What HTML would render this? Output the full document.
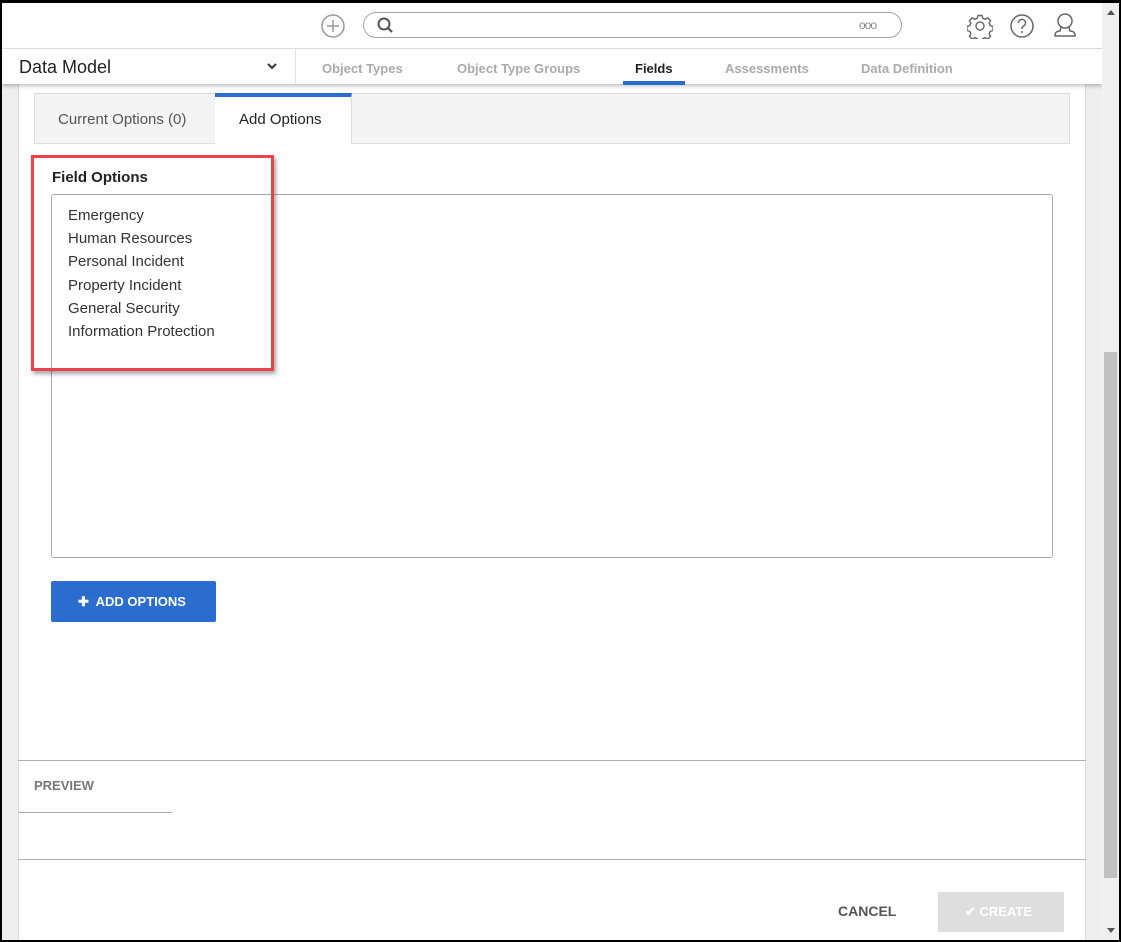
<!DOCTYPE html>
<html><head><style>
*{box-sizing:border-box;margin:0;padding:0}
body{width:1121px;height:942px;background:#000;font-family:"Liberation Sans",sans-serif;position:relative;overflow:hidden}
.abs{position:absolute}
</style></head><body>
<div class="abs" style="left:2px;top:3px;width:1100px;height:937px;background:#eeeeee"></div>
<div class="abs" style="left:18px;top:84px;width:1068px;height:856px;background:#fff;border-left:1px solid #ddd;border-right:1px solid #ddd"></div>
<div class="abs" style="left:2px;top:3px;width:1100px;height:46px;background:#fff;border-bottom:1px solid #e2e2e2"></div>
<svg class="abs" style="left:320px;top:13px" width="26" height="26" viewBox="0 0 26 26"><circle cx="13" cy="13" r="11" fill="none" stroke="#9a9a9a" stroke-width="1.5"/><path d="M13 7v12M7 13h12" stroke="#9a9a9a" stroke-width="1.5"/></svg>
<div class="abs" style="left:363px;top:12px;width:539px;height:26px;border:1.5px solid #a5a5a5;border-radius:13px;background:#fff"></div>
<svg class="abs" style="left:376px;top:16px" width="18" height="18" viewBox="0 0 18 18"><circle cx="8" cy="8" r="5.5" fill="none" stroke="#555" stroke-width="2"/><path d="M12 12l4 4" stroke="#555" stroke-width="2.2"/></svg>
<div class="abs" style="left:859px;top:18px;font-size:12px;color:#888;letter-spacing:-1px">ooo</div>
<svg class="abs" style="left:967px;top:13px" width="26" height="26" viewBox="0 0 26 26"><g fill="none" stroke="#666" stroke-width="1.4"><circle cx="13" cy="13" r="4"/><path d="M11 2.5h4l.8 2.8 2.4 1 2.6-1.4 2.8 2.8-1.4 2.6 1 2.4 2.8.8v4l-2.8.8-1 2.4 1.4 2.6-2.8 2.8-2.6-1.4-2.4 1-.8 2.8h-4l-.8-2.8-2.4-1-2.6 1.4-2.8-2.8 1.4-2.6-1-2.4-2.8-.8v-4l2.8-.8 1-2.4-1.4-2.6 2.8-2.8 2.6 1.4 2.4-1z"/></g></svg>
<svg class="abs" style="left:1009px;top:13px" width="26" height="26" viewBox="0 0 26 26"><circle cx="13" cy="13" r="11" fill="none" stroke="#666" stroke-width="1.5"/><path d="M9.5 10a3.5 3.5 0 1 1 5 3c-1.2.7-1.5 1.3-1.5 3" fill="none" stroke="#666" stroke-width="1.5"/><circle cx="13" cy="19" r="1" fill="#666"/></svg>
<svg class="abs" style="left:1052px;top:12px" width="26" height="28" viewBox="0 0 26 28"><circle cx="13" cy="9" r="7" fill="none" stroke="#666" stroke-width="1.5"/><path d="M9 15l-1 4c-3 0-5 1.5-5 4v1h20v-1c0-2.5-2-4-5-4l-1-4" fill="none" stroke="#666" stroke-width="1.5"/></svg>
<div class="abs" style="left:2px;top:49px;width:1100px;height:35px;background:#fff;box-shadow:0 2px 4px rgba(0,0,0,.25)"></div>
<div class="abs" style="left:19px;top:57px;font-size:18px;color:#222">Data Model</div>
<svg class="abs" style="left:266px;top:61px" width="12" height="10" viewBox="0 0 12 10"><path d="M2 3l4 4 4-4" fill="none" stroke="#333" stroke-width="2"/></svg>
<div class="abs" style="left:295px;top:49px;width:1px;height:35px;background:#e2e2e2"></div>
<div class="abs" style="left:322px;top:61px;font-size:13px;color:#aaa;font-weight:bold">Object Types</div>
<div class="abs" style="left:457px;top:61px;font-size:13px;color:#aaa;font-weight:bold">Object Type Groups</div>
<div class="abs" style="left:635px;top:61px;font-size:13px;color:#222;font-weight:bold">Fields</div>
<div class="abs" style="left:623px;top:81px;width:62px;height:4px;background:#2a6dce"></div>
<div class="abs" style="left:725px;top:61px;font-size:13px;color:#aaa;font-weight:bold">Assessments</div>
<div class="abs" style="left:861px;top:61px;font-size:13px;color:#aaa;font-weight:bold">Data Definition</div>
<div class="abs" style="left:34px;top:93px;width:1036px;height:51px;background:#f4f4f4;border:1px solid #dcdcdc"></div>
<div class="abs" style="left:58px;top:111px;font-size:15px;color:#555">Current Options (0)</div>
<div class="abs" style="left:215px;top:93px;width:137px;height:51px;background:#fff;border-right:1px solid #dcdcdc;border-top:4px solid #2a6dce"></div>
<div class="abs" style="left:239px;top:111px;font-size:15px;color:#222">Add Options</div>
<div class="abs" style="left:51px;top:194px;width:1002px;height:364px;background:#fff;border:1px solid #aaa;border-radius:3px"></div>
<div class="abs" style="left:68px;top:204px;font-size:15px;color:#333;line-height:23.2px">Emergency<br>Human Resources<br>Personal Incident<br>Property Incident<br>General Security<br>Information Protection</div>
<div class="abs" style="left:52px;top:169px;font-size:15px;color:#222;font-weight:bold">Field Options</div>
<div class="abs" style="left:31px;top:155px;width:243px;height:216px;border:3px solid #ec4249;box-shadow:2px 3px 4px rgba(0,0,0,.35)"></div>
<div class="abs" style="left:51px;top:581px;width:165px;height:41px;background:#2a6dce;border-radius:2px;color:#fff;font-size:13px;font-weight:bold;line-height:41px;padding-left:27px">✚&nbsp; ADD OPTIONS</div>
<div class="abs" style="left:18px;top:760px;width:1068px;height:1px;background:#b0b0b0"></div>
<div class="abs" style="left:34px;top:778px;font-size:13px;color:#777;font-weight:bold">PREVIEW</div>
<div class="abs" style="left:18px;top:812px;width:154px;height:1px;background:#aaa"></div>
<div class="abs" style="left:18px;top:859px;width:1068px;height:1px;background:#b0b0b0"></div>
<div class="abs" style="left:838px;top:903px;font-size:14px;color:#555;font-weight:bold">CANCEL</div>
<div class="abs" style="left:938px;top:892px;width:126px;height:40px;background:#dedede;border-radius:2px;color:#fff;font-size:13px;font-weight:bold;line-height:40px;padding-left:27px">✔ CREATE</div>
<div class="abs" style="left:1102px;top:3px;width:17px;height:937px;background:#f0f0f0"></div>
<div class="abs" style="left:1104px;top:352px;width:13px;height:526px;background:#c1c1c1"></div>
<div class="abs" style="left:1107px;top:10px;width:0;height:0;border-left:4px solid transparent;border-right:4px solid transparent;border-bottom:5px solid #555"></div>
<div class="abs" style="left:1107px;top:928px;width:0;height:0;border-left:4px solid transparent;border-right:4px solid transparent;border-top:5px solid #555"></div>
</body></html>
